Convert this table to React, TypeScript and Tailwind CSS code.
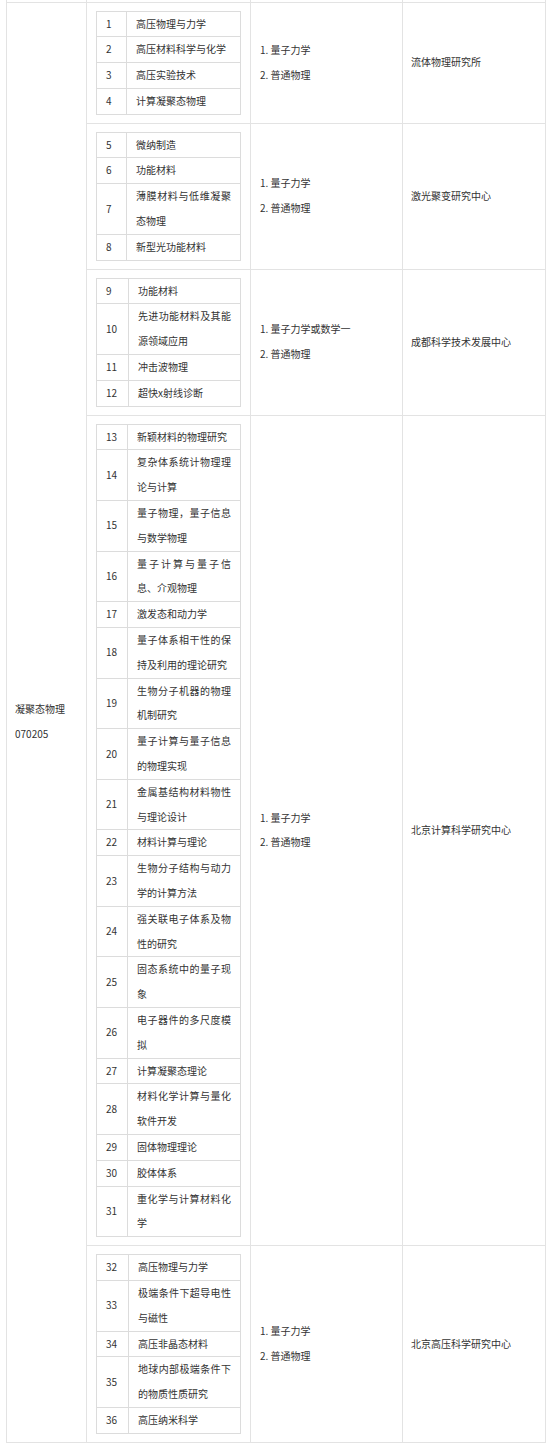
import React from "react";

type Item = { no: number; name: string };
type Group = {
  numW: string;
  items: Item[];
  exams: string[];
  unit: string;
};

const groups: Group[] = [
  {
    numW: "w-[30px]",
    items: [
      { no: 1, name: "高压物理与力学" },
      { no: 2, name: "高压材料科学与化学" },
      { no: 3, name: "高压实验技术" },
      { no: 4, name: "计算凝聚态物理" },
    ],
    exams: ["1. 量子力学", "2. 普通物理"],
    unit: "流体物理研究所",
  },
  {
    numW: "w-[30px]",
    items: [
      { no: 5, name: "微纳制造" },
      { no: 6, name: "功能材料" },
      { no: 7, name: "薄膜材料与低维凝聚态物理" },
      { no: 8, name: "新型光功能材料" },
    ],
    exams: ["1. 量子力学", "2. 普通物理"],
    unit: "激光聚变研究中心",
  },
  {
    numW: "w-[32px]",
    items: [
      { no: 9, name: "功能材料" },
      { no: 10, name: "先进功能材料及其能源领域应用" },
      { no: 11, name: "冲击波物理" },
      { no: 12, name: "超快x射线诊断" },
    ],
    exams: ["1. 量子力学或数学一", "2. 普通物理"],
    unit: "成都科学技术发展中心",
  },
  {
    numW: "w-[31px]",
    items: [
      { no: 13, name: "新颖材料的物理研究" },
      { no: 14, name: "复杂体系统计物理理论与计算" },
      { no: 15, name: "量子物理，量子信息与数学物理" },
      { no: 16, name: "量子计算与量子信息、介观物理" },
      { no: 17, name: "激发态和动力学" },
      { no: 18, name: "量子体系相干性的保持及利用的理论研究" },
      { no: 19, name: "生物分子机器的物理机制研究" },
      { no: 20, name: "量子计算与量子信息的物理实现" },
      { no: 21, name: "金属基结构材料物性与理论设计" },
      { no: 22, name: "材料计算与理论" },
      { no: 23, name: "生物分子结构与动力学的计算方法" },
      { no: 24, name: "强关联电子体系及物性的研究" },
      { no: 25, name: "固态系统中的量子现象" },
      { no: 26, name: "电子器件的多尺度模拟" },
      { no: 27, name: "计算凝聚态理论" },
      { no: 28, name: "材料化学计算与量化软件开发" },
      { no: 29, name: "固体物理理论" },
      { no: 30, name: "胶体体系" },
      { no: 31, name: "重化学与计算材料化学" },
    ],
    exams: ["1. 量子力学", "2. 普通物理"],
    unit: "北京计算科学研究中心",
  },
  {
    numW: "w-[32px]",
    items: [
      { no: 32, name: "高压物理与力学" },
      { no: 33, name: "极端条件下超导电性与磁性" },
      { no: 34, name: "高压非晶态材料" },
      { no: 35, name: "地球内部极端条件下的物质性质研究" },
      { no: 36, name: "高压纳米科学" },
    ],
    exams: ["1. 量子力学", "2. 普通物理"],
    unit: "北京高压科学研究中心",
  },
];

const cell = "border border-[#e3e3e3] align-middle";

function Directions({ group }: { group: Group }) {
  return (
    <table className="w-full table-fixed border-collapse">
      <colgroup>
        <col className={group.numW} />
        <col />
      </colgroup>
      <tbody>
        {group.items.map((it) => (
          <tr key={it.no}>
            <td className="border border-[#dcdcdc] px-[9px] py-0 align-middle">{it.no}</td>
            <td className="border border-[#dcdcdc] px-[9px] py-0 align-middle text-justify">
              {it.name}
            </td>
          </tr>
        ))}
      </tbody>
    </table>
  );
}

export default function App() {
  return (
    <div className="w-[550px] bg-white font-['Noto_Sans_CJK_SC','Microsoft_YaHei',sans-serif] text-[10px] leading-[24.8px] text-[#333]">
      <table className="ml-[6px] w-[539px] table-fixed border-collapse">
        <colgroup>
          <col className="w-[80px]" />
          <col className="w-[164px]" />
          <col className="w-[152px]" />
          <col className="w-[143px]" />
        </colgroup>
        <tbody>
          {/* top sliver of the row above */}
          <tr className="h-[2px]">
            <td className="h-[2px] border-x border-[#e3e3e3] p-0" />
            <td className="h-[2px] border-x border-[#e3e3e3] p-0" />
            <td className="h-[2px] border-x border-[#e3e3e3] p-0" />
            <td className="h-[2px] border-x border-[#e3e3e3] p-0" />
          </tr>
          {groups.map((g, i) => (
            <tr key={g.unit}>
              {i === 0 && (
                <td rowSpan={groups.length} className={`${cell} px-[8px]`}>
                  <p>凝聚态物理</p>
                  <p>070205</p>
                </td>
              )}
              <td className={`${cell} px-[9px] py-[8px]`}>
                <Directions group={g} />
              </td>
              <td className={`${cell} px-[9px]`}>
                {g.exams.map((e) => (
                  <p key={e}>{e}</p>
                ))}
              </td>
              <td className={`${cell} px-[8px]`}>{g.unit}</td>
            </tr>
          ))}
        </tbody>
      </table>
    </div>
  );
}
